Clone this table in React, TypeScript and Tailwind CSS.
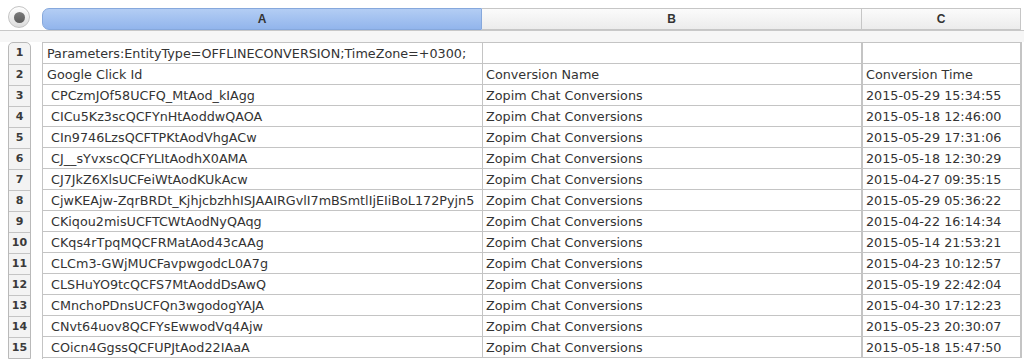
import React from 'react';

const rows: [string, string, string][] = [
  ['Parameters:EntityType=OFFLINECONVERSION;TimeZone=+0300;', '', ''],
  ['Google Click Id', 'Conversion Name', 'Conversion Time'],
  [' CPCzmJOf58UCFQ_MtAod_kIAgg', 'Zopim Chat Conversions', '2015-05-29 15:34:55'],
  [' CICu5Kz3scQCFYnHtAoddwQAOA', 'Zopim Chat Conversions', '2015-05-18 12:46:00'],
  [' CIn9746LzsQCFTPKtAodVhgACw', 'Zopim Chat Conversions', '2015-05-29 17:31:06'],
  [' CJ__sYvxscQCFYLItAodhX0AMA', 'Zopim Chat Conversions', '2015-05-18 12:30:29'],
  [' CJ7JkZ6XlsUCFeiWtAodKUkAcw', 'Zopim Chat Conversions', '2015-04-27 09:35:15'],
  [' CjwKEAjw-ZqrBRDt_KjhjcbzhhISJAAIRGvlI7mBSmtlIjEIiBoL172Pyjn5', 'Zopim Chat Conversions', '2015-05-29 05:36:22'],
  [' CKiqou2misUCFTCWtAodNyQAqg', 'Zopim Chat Conversions', '2015-04-22 16:14:34'],
  [' CKqs4rTpqMQCFRMatAod43cAAg', 'Zopim Chat Conversions', '2015-05-14 21:53:21'],
  [' CLCm3-GWjMUCFavpwgodcL0A7g', 'Zopim Chat Conversions', '2015-04-23 10:12:57'],
  [' CLSHuYO9tcQCFS7MtAoddDsAwQ', 'Zopim Chat Conversions', '2015-05-19 22:42:04'],
  [' CMnchoPDnsUCFQn3wgodogYAJA', 'Zopim Chat Conversions', '2015-04-30 17:12:23'],
  [' CNvt64uov8QCFYsEwwodVq4Ajw', 'Zopim Chat Conversions', '2015-05-23 20:30:07'],
  [' COicn4GgssQCFUPJtAod22IAaA', 'Zopim Chat Conversions', '2015-05-18 15:47:50'],
];

const cellFont = { fontFamily: '"DejaVu Sans", Verdana, sans-serif' };

const App: React.FC = () => {
  return (
    <div className="w-[1024px] h-[360px] overflow-hidden bg-white">
      {/* column header strip */}
      <div className="flex items-start h-[30px] pt-[6px] pl-[8px]">
        <div className="w-[22px] h-[22px] rounded-full border border-[#c4c4c4] bg-gradient-to-b from-[#fdfdfd] to-[#dcdcdc] flex items-center justify-center shadow-[inset_0_1px_1px_rgba(255,255,255,0.9)]">
          <div className="w-[11px] h-[11px] rounded-full bg-gradient-to-b from-[#7a7a7a] to-[#5c5c5c]" />
        </div>
        <div className="flex mt-[2px] ml-[12px] h-[22px] font-bold text-[12px] text-[#333]" style={{ fontFamily: '"Liberation Sans", Arial, sans-serif' }}>
          <div className="w-[440px] rounded-tl-[7px] rounded-bl-[7px] border border-[#86a8dc] bg-gradient-to-b from-[#b3cdf4] to-[#92b5ec] flex items-center justify-center">A</div>
          <div className="w-[380px] border-y border-r border-[#c6c6c6] bg-gradient-to-b from-[#fbfbfb] to-[#ececec] flex items-center justify-center">B</div>
          <div className="w-[159px] border-y border-r border-[#c6c6c6] bg-gradient-to-b from-[#fbfbfb] to-[#ececec] flex items-center justify-center">C</div>
        </div>
      </div>
      <div className="h-[12px] border-t border-[#c8c8c8] bg-[#f6f6f6]" />

      {/* body */}
      <div className="flex pl-[8px]">
        <div className="w-[23px] rounded-t-[5px] border border-[#b9b9b9] bg-[#f3f3f3] overflow-hidden">
          {rows.map((_, i) => (
            <div
              key={i}
              className="h-[21px] border-t border-[#c4c4c4] first:border-t-0 flex items-center justify-center text-[11px] font-bold text-[#3a3a3a]"
              style={cellFont}
            >
              {i + 1}
            </div>
          ))}
        </div>
        <div className="ml-[11px] border-t border-l border-[#c4c4c4]">
          {rows.map((r, i) => (
            <div key={i} className="flex h-[21px] border-b border-[#c4c4c4] text-[12.75px] text-[#333]" style={cellFont}>
              <div className="w-[440px] border-r border-[#c4c4c4] pl-[4px] whitespace-pre overflow-hidden leading-[21px]">{r[0]}</div>
              <div className="w-[380px] border-r-2 border-[#c4c4c4] pl-[3px] whitespace-pre overflow-hidden leading-[21px]">{r[1]}</div>
              <div className="w-[159px] border-r-2 border-[#c4c4c4] pl-[3px] whitespace-pre overflow-hidden leading-[21px]">{r[2]}</div>
            </div>
          ))}
        </div>
      </div>
    </div>
  );
};

export default App;
